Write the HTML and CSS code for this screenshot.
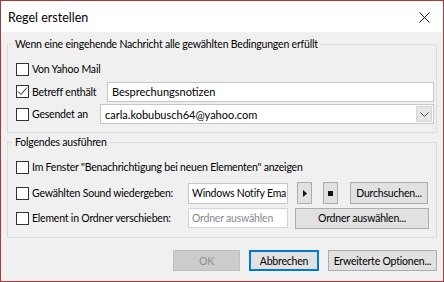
FILE: index.html
```html
<!DOCTYPE html>
<html>
  <head>
    <meta charset=utf-8>
    <title>Regel erstellen</title>
    <link rel="stylesheet" href="styles.css">
  </head>
  <body>
    <div class="window">
      <div class="titlebar">
        <span class="title">Regel erstellen</span>
        <span class="close">
          <svg width="11" height="11" viewBox="0 0 11 11"><path d="M0.5 0.5L10.5 10.5M10.5 0.5L0.5 10.5" stroke="#111" stroke-width="1"/></svg>
        </span>
      </div>
      <div class="content">
        <fieldset class="group first">
          <legend>Wenn eine eingehende Nachricht alle gewählten Bedingungen erfüllt</legend>
          <div class="row r1">
            <label class="check"><span class="box"></span>Von Yahoo Mail</label>
          </div>
          <div class="row r2">
            <label class="check w-subject"><span class="box checked"><svg width="11" height="11" viewBox="0 0 11 11"><path d="M1 5.5L4 8.5L10 1.5" fill="none" stroke="#222" stroke-width="1"/></svg></span>Betreff enthält</label>
            <div class="field grow">Besprechungsnotizen</div>
          </div>
          <div class="row r3">
            <label class="check w-sent"><span class="box"></span>Gesendet an</label>
            <div class="combo grow">
              <span class="combo-text">carla.kobubusch64@yahoo.com</span>
              <span class="combo-btn"><svg width="9" height="5" viewBox="0 0 9 5"><path d="M0.5 0.5L4.5 4.5L8.5 0.5" fill="none" stroke="#555" stroke-width="1"/></svg></span>
            </div>
          </div>
        </fieldset>
        <fieldset class="group second">
          <legend>Folgendes ausführen</legend>
          <div class="row ra">
            <label class="check"><span class="box"></span>Im Fenster "Benachrichtigung bei neuen Elementen" anzeigen</label>
          </div>
          <div class="row rb">
            <label class="check w-action"><span class="box"></span>Gewählten Sound wiedergeben:</label>
            <div class="field short narrow">Windows Notify Ema</div>
            <button class="btn icon play"><svg width="4" height="7" viewBox="0 0 4 7"><path d="M0 0L4 3.5L0 7Z" fill="#111"/></svg></button>
            <button class="btn icon stop"><svg width="5" height="5" viewBox="0 0 5 5"><rect width="5" height="5" fill="#111"/></svg></button>
            <button class="btn browse">Durchsuchen...</button>
          </div>
          <div class="row rc">
            <label class="check w-action"><span class="box"></span>Element in Ordner verschieben:</label>
            <div class="field short narrow placeholder">Ordner auswählen</div>
            <button class="btn folder">Ordner auswählen...</button>
          </div>
        </fieldset>
        <div class="actions">
          <button class="btn ok" disabled>OK</button>
          <button class="btn cancel">Abbrechen</button>
          <button class="btn advanced">Erweiterte Optionen...</button>
        </div>
      </div>
    </div>
  </body>
</html>
```

FILE: styles.css
```css
body {
  margin: 0;
  font-family: Lato, "Noto Sans", sans-serif;
  font-size: 11px;
  color: #000;
}

.window {
  width: 444px;
  height: 282px;
  box-sizing: border-box;
  border: 1px solid #a8393b;
  background: #f0f0f0;
  display: flex;
  flex-direction: column;
}

.titlebar {
  height: 31px;
  flex: none;
  background: #fff;
  display: flex;
  align-items: center;
  justify-content: space-between;
  padding: 0 13px 0 7px;
}

.title {
  font-size: 12.5px;
  padding-top: 1px;
}

.close {
  display: flex;
  padding-top: 2px;
}

.content {
  padding: 4px 6px 0 6px;
}

.group {
  margin: 0;
  padding: 0 2px 7px 8px;
  border: 1px solid #dcdcdc;
  min-width: 0;
}

.group legend {
  margin-left: -3px;
  padding: 0 2px;
  line-height: 16px;
  white-space: nowrap;
  font-size: 10.5px;
  letter-spacing: -0.2px;
}

.group.first {
  padding-top: 6px;
}

.group.second {
  margin-top: 1px;
  padding-top: 6px;
  padding-bottom: 8px;
  padding-right: 5px;
}

.row {
  display: flex;
  align-items: center;
}

.r1 { height: 22px; }
.r2 { height: 23px; }
.r3 { height: 22px; }
.ra { height: 22px; }
.rb { height: 22px; margin-top: 4px; }
.rc { height: 22px; margin-top: 3px; }

.check {
  display: flex;
  align-items: center;
  flex: none;
  white-space: nowrap;
  font-size: 10.5px;
  letter-spacing: -0.2px;
}

.box {
  width: 13px;
  height: 13px;
  box-sizing: border-box;
  border: 1px solid #333;
  background: #fff;
  margin-right: 3px;
  display: flex;
  align-items: center;
  justify-content: center;
}

.w-subject { width: 91px; }
.w-sent { width: 84px; }
.w-action { width: 172px; }

.grow { flex: 1; }

.field {
  height: 20px;
  box-sizing: border-box;
  border: 1px solid #c6c6c6;
  background: #fff;
  padding: 0 4px;
  line-height: 18px;
  white-space: nowrap;
  overflow: hidden;
}

.short {
  width: 100px;
  flex: none;
  padding: 0 3px;
}

.narrow {
  font-size: 10.5px;
  letter-spacing: -0.2px;
}

.rb .short { height: 21px; line-height: 19px; }

.placeholder {
  color: #8a8a8a;
  border-color: #cdd6e2;
}

.combo {
  height: 20px;
  box-sizing: border-box;
  border: 1px solid #c6c6c6;
  background: #fff;
  display: flex;
  align-items: center;
  padding: 0 1px 0 4px;
}

.combo-text {
  flex: 1;
}

.combo-btn {
  width: 16px;
  height: 16px;
  background: #e6e6e6;
  border: 1px solid #d4d4d4;
  box-sizing: border-box;
  display: flex;
  align-items: center;
  justify-content: center;
}

.btn {
  font-family: Lato, "Noto Sans", sans-serif;
  font-size: 10.5px;
  letter-spacing: -0.2px;
  color: #000;
  background: #e1e1e1;
  border: 1px solid #adadad;
  height: 22px;
  padding: 0;
  margin: 0;
  flex: none;
  white-space: nowrap;
}

.icon {
  width: 15px;
  display: flex;
  align-items: center;
  justify-content: center;
}

.play { margin-left: 9px; }
.stop { margin-left: 11px; }
.browse { margin-left: 12px; width: 78px; }
.folder { margin-left: 7px; width: 134px; height: 21px; }

.actions {
  display: flex;
  justify-content: flex-end;
  gap: 9px;
  margin-top: 12px;
}

.actions .btn {
  height: 21px;
}

.ok {
  width: 67px;
  color: #8f8f8f;
  background: #cccccc;
  border-color: #bfbfbf;
}

.cancel {
  width: 70px;
  border: 2px solid #0078d7;
}

.advanced {
  width: 109px;
}
```
